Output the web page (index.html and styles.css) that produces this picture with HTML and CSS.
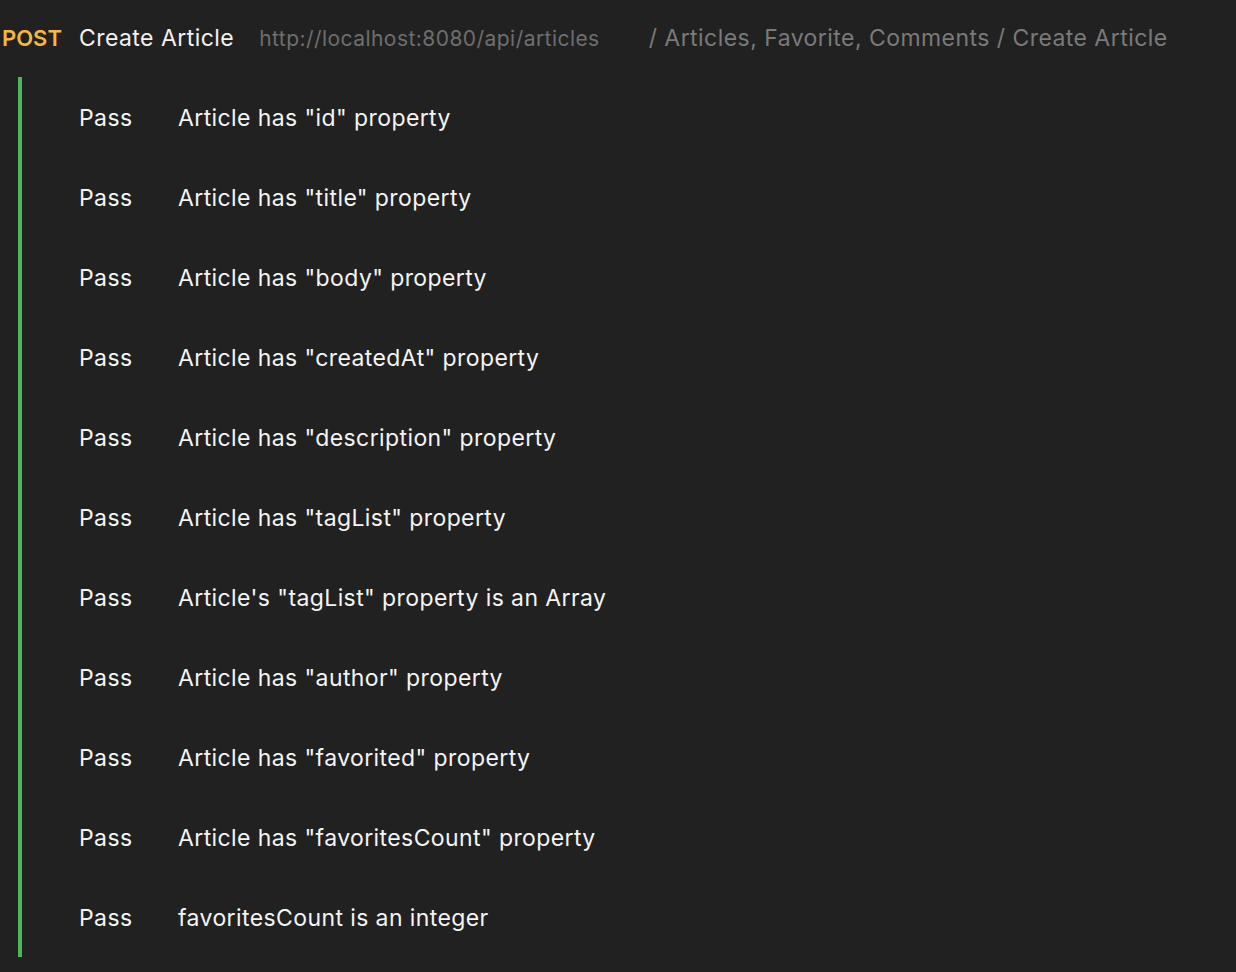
FILE: index.html
```html
<!DOCTYPE html>
<html>
<head>
<meta charset="utf-8">
<link rel="stylesheet" href="styles.css">
</head>
<body>
<div class="header">
  <span class="method">POST</span>
  <span class="name">Create Article</span>
  <span class="url">http://localhost:8080/api/articles</span>
  <span class="crumb">/ Articles, Favorite, Comments / Create Article</span>
</div>
<div class="tests">
  <div class="row"><span class="status">Pass</span><span class="test">Article has "id" property</span></div>
  <div class="row"><span class="status">Pass</span><span class="test">Article has "title" property</span></div>
  <div class="row"><span class="status">Pass</span><span class="test">Article has "body" property</span></div>
  <div class="row"><span class="status">Pass</span><span class="test">Article has "createdAt" property</span></div>
  <div class="row"><span class="status">Pass</span><span class="test">Article has "description" property</span></div>
  <div class="row"><span class="status">Pass</span><span class="test">Article has "tagList" property</span></div>
  <div class="row"><span class="status">Pass</span><span class="test">Article's "tagList" property is an Array</span></div>
  <div class="row"><span class="status">Pass</span><span class="test">Article has "author" property</span></div>
  <div class="row"><span class="status">Pass</span><span class="test">Article has "favorited" property</span></div>
  <div class="row"><span class="status">Pass</span><span class="test">Article has "favoritesCount" property</span></div>
  <div class="row"><span class="status">Pass</span><span class="test">favoritesCount is an integer</span></div>
</div>
</body>
</html>
```
FILE: styles.css
```css
html, body {
  margin: 0;
  padding: 0;
  background: #212121;
  font-family: Inter, "Noto Sans", sans-serif;
  color: #ffffff;
}
.header {
  display: flex;
  align-items: baseline;
  height: 77px;
  padding-left: 2px;
  box-sizing: border-box;
  padding-top: 23px;
  font-size: 23px;
  line-height: 30px;
  letter-spacing: 0.45px;
}
.method {
  color: #f4b93c;
  font-weight: 600;
  font-size: 22px;
  letter-spacing: 0;
  margin-right: 17px;
}
.name {
  color: #f2f2f2;
  margin-right: 25px;
}
.url {
  color: #6e6e6e;
  font-size: 21px;
  margin-right: 49px;
}
.crumb {
  color: #7a7a7a;
}
.tests {
  margin-left: 18px;
  border-left: 4px solid #4fb75b;
}
.row {
  display: flex;
  align-items: center;
  height: 80px;
  box-sizing: border-box;
  padding-top: 2px;
  padding-left: 57px;
  font-size: 23px;
  letter-spacing: 0.4px;
  color: #f4f4f4;
}
.status {
  width: 99px;
  flex: none;
}
```
